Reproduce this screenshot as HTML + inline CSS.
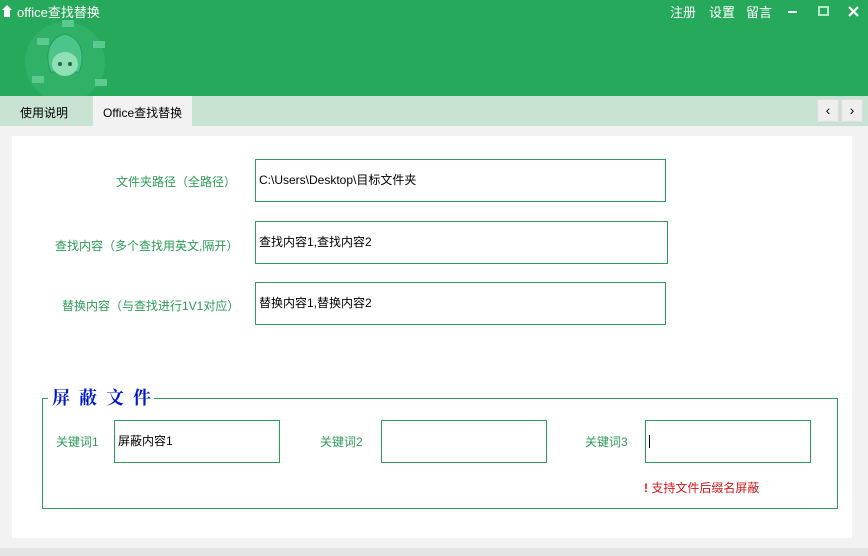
<!DOCTYPE html>
<html><head><meta charset="utf-8"><style>
*{margin:0;padding:0;box-sizing:border-box}
body{width:868px;height:556px;overflow:hidden;background:#f2f2f2;font-family:"Liberation Sans","Noto Sans CJK SC",sans-serif;font-size:12px;position:relative}
.abs{position:absolute}
.top{left:0;top:0;width:868px;height:96px;background:#27a95b}
.tabs{left:0;top:96px;width:868px;height:30px;background:#c9e3d3}
.panel{left:12px;top:136px;width:840px;height:402px;background:#fff}
.lbl{color:#2d9a57;font-size:12px;white-space:nowrap}
.inp{border:1px solid #2f9a5a;background:#fff;font-size:12px;color:#000;padding-left:3px;line-height:40px;white-space:nowrap}
</style></head><body>
<div class="abs top"></div>
<svg class="abs" style="left:15px;top:14px" width="110" height="82">
<circle cx="50" cy="48" r="40" fill="#3bb773" opacity=".5"/>
<path d="M50 20 C32 24 30 44 36 58 L64 58 C70 44 68 24 50 20Z" fill="#4cc58a" stroke="#2a9b5e"/>
<ellipse cx="50" cy="50" rx="13" ry="12" fill="#8fe0b5"/>
<circle cx="45" cy="50" r="2" fill="#1d6b45"/><circle cx="55" cy="50" r="2" fill="#1d6b45"/>
<rect x="22" y="24" width="12" height="7" fill="#5cc98f"/><rect x="78" y="27" width="12" height="7" fill="#5cc98f"/>
<rect x="47" y="6" width="12" height="7" fill="#5cc98f"/><rect x="17" y="62" width="12" height="7" fill="#5cc98f"/><rect x="80" y="65" width="12" height="7" fill="#5cc98f"/>
</svg>
<svg class="abs" style="left:1px;top:4px" width="12" height="14"><path d="M6 1 L11 6 L9 6 L9 13 L3 13 L3 6 L1 6Z" fill="#fff"/></svg>
<div class="abs" style="left:17px;top:2px;color:#fff;font-size:13px">office查找替换</div>
<div class="abs" style="left:670px;top:2px;color:#fff;font-size:13px">注册</div>
<div class="abs" style="left:709px;top:2px;color:#fff;font-size:13px">设置</div>
<div class="abs" style="left:746px;top:2px;color:#fff;font-size:13px">留言</div>
<div class="abs" style="left:788px;top:11px;width:9px;height:2px;background:#fff"></div>
<div class="abs" style="left:818px;top:6px;width:11px;height:10px;border:2px solid #b8e6c9"></div>
<svg class="abs" style="left:847px;top:5px" width="13" height="13"><path d="M2 2L11 11M11 2L2 11" stroke="#fff" stroke-width="2.2"/></svg>
<div class="abs tabs"></div>
<div class="abs" style="left:20px;top:104px;font-size:12px">使用说明</div>
<div class="abs" style="left:93px;top:96px;width:99px;height:30px;background:#f2f2f2"></div>
<div class="abs" style="left:103px;top:104px;font-size:12px">Office查找替换</div>
<div class="abs" style="left:817px;top:99px;width:22px;height:23px;background:#eee;border:1px solid #ddd;text-align:center;line-height:21px;font-size:14px">&lsaquo;</div>
<div class="abs" style="left:841px;top:99px;width:22px;height:23px;background:#eee;border:1px solid #ddd;text-align:center;line-height:21px;font-size:14px">&rsaquo;</div>
<div class="abs panel"></div>
<div class="abs" style="left:0;top:548px;width:868px;height:8px;background:#e4e4e4"></div>
<div class="abs lbl" style="left:116px;top:173px">文件夹路径（全路径）</div>
<div class="abs lbl" style="left:55px;top:237px">查找内容（多个查找用英文,隔开）</div>
<div class="abs lbl" style="left:62px;top:297px">替换内容（与查找进行1V1对应）</div>
<div class="abs inp" style="left:255px;top:159px;width:411px;height:43px">C:\Users\Desktop\目标文件夹</div>
<div class="abs inp" style="left:255px;top:221px;width:413px;height:43px">查找内容1,查找内容2</div>
<div class="abs inp" style="left:255px;top:282px;width:411px;height:43px">替换内容1,替换内容2</div>
<div class="abs" style="left:42px;top:398px;width:796px;height:111px;border:1px solid #2f9a5a"></div>
<div class="abs" style="left:48px;top:384px;width:106px;height:26px;background:#fff"></div>
<div class="abs" style="left:52px;top:384px;color:#0018c8;font-family:'Noto Serif CJK SC',serif;font-weight:bold;font-size:18px;letter-spacing:9px;white-space:nowrap">屏蔽文件</div>
<div class="abs lbl" style="left:56px;top:433px">关键词1</div>
<div class="abs lbl" style="left:320px;top:433px">关键词2</div>
<div class="abs lbl" style="left:585px;top:433px">关键词3</div>
<div class="abs inp" style="left:114px;top:420px;width:166px;height:43px">屏蔽内容1</div>
<div class="abs inp" style="left:381px;top:420px;width:166px;height:43px"></div>
<div class="abs inp" style="left:645px;top:420px;width:166px;height:43px"><span style="display:inline-block;width:1px;height:13px;background:#000;vertical-align:middle"></span></div>
<div class="abs" style="left:644px;top:479px;color:#d01818;font-size:12px"><b>!</b>&nbsp;支持文件后缀名屏蔽</div>
</body></html>
